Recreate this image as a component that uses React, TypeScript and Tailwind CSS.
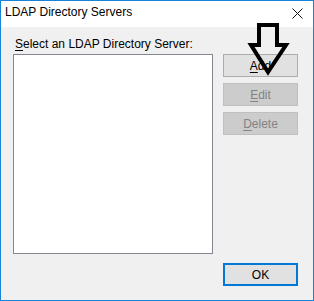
const font = { fontFamily: '"Liberation Sans", Arial, sans-serif' };

function DialogButton({
  hot,
  rest,
  disabled,
  focused,
}: {
  hot: string;
  rest: string;
  disabled?: boolean;
  focused?: boolean;
}) {
  const look = disabled
    ? "bg-[#cccccc] border border-[#bfbfbf] text-[#838383]"
    : focused
      ? "bg-[#e1e1e1] border-2 border-[#0078d7] text-black"
      : "bg-[#e1e1e1] border border-[#adadad] text-black";
  return (
    <div className={`w-[75px] h-[23px] flex items-center justify-center text-[12px] leading-none ${look}`}>
      <span>
        <span className="underline underline-offset-2">{hot}</span>
        {rest}
      </span>
    </div>
  );
}

export default function App() {
  return (
    <div
      className="w-[314px] h-[301px] border border-[#1883d7] flex flex-col bg-[#f0f0f0] relative"
      style={font}
    >
      {/* Title bar */}
      <header className="h-[26px] bg-white flex items-start justify-between">
        <span className="pl-[4px] pt-[3px] text-[12px] leading-[16px] text-black">LDAP Directory Servers</span>
        <svg width="11" height="11" viewBox="0 0 11 11" className="mt-[7px] mr-[10px]">
          <path d="M0.5 0.5 L10.5 10.5 M10.5 0.5 L0.5 10.5" stroke="#111" strokeWidth="1" />
        </svg>
      </header>

      {/* Body */}
      <div className="flex-1 flex flex-col pl-[12px] pt-[9px]">
        <div className="pl-[2px] text-[12px] leading-[16px] text-black">
          <span className="underline underline-offset-2">S</span>elect an LDAP Directory Server:
        </div>
        <div className="flex gap-[10px] mt-[2px]">
          <div className="w-[200px] h-[200px] bg-white border border-[#828790]" />
          <div className="flex flex-col gap-[6px]">
            <DialogButton hot="A" rest="dd" />
            <DialogButton hot="E" rest="dit" disabled />
            <DialogButton hot="D" rest="elete" disabled />
          </div>
        </div>
        <div className="flex justify-end pr-[15px] mt-[9px]">
          <DialogButton hot="" rest="OK" focused />
        </div>
      </div>

      {/* Pointer arrow drawn over the Add button */}
      <svg
        width="314"
        height="301"
        viewBox="0 0 314 301"
        className="absolute left-[-1px] top-[-1px] pointer-events-none"
      >
        <path
          d="M259 25 H277 V45 H286 L268 72 L251 45 H259 Z"
          fill="none"
          stroke="#000"
          strokeWidth="4"
          strokeLinejoin="miter"
        />
      </svg>
    </div>
  );
}
